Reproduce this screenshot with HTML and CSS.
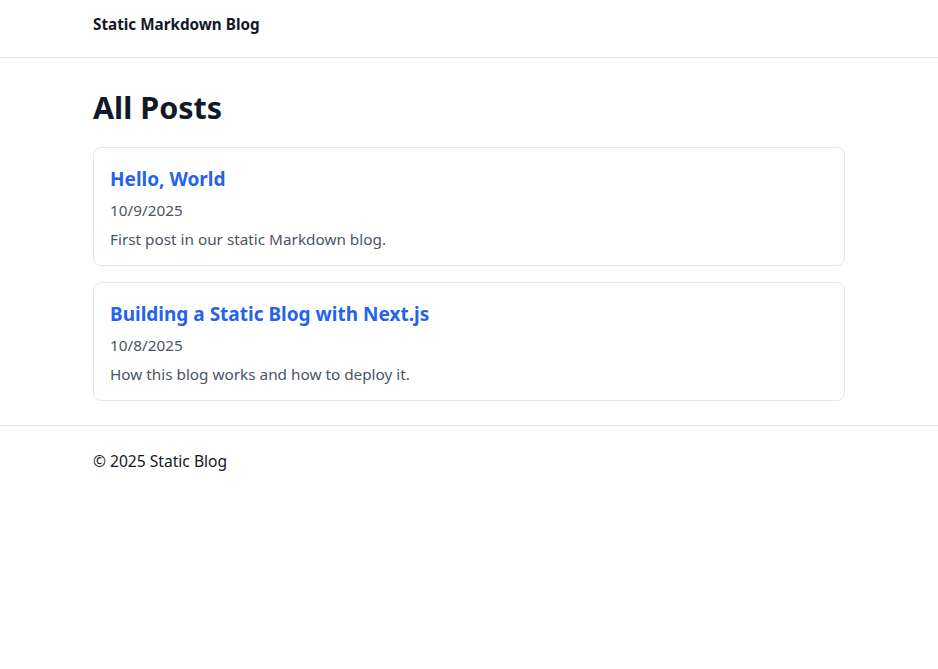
FILE: index.html
```html
<!DOCTYPE html>
<html lang="en">
<head>
    <meta charset="UTF-8">
    <meta name="viewport" content="width=device-width, initial-scale=1.0">
    <title>Static Markdown Blog</title>
    <link rel="stylesheet" href="styles.css">
</head>
<body>
    <header class="site-header">
        <div class="container">
            <a class="brand" href="#">Static Markdown Blog</a>
        </div>
    </header>

    <main class="container main">
        <h1 class="page-title">All Posts</h1>
        <ul class="post-list">
            <li class="post-card">
                <h2 class="post-title"><a href="#">Hello, World</a></h2>
                <p class="post-date">10/9/2025</p>
                <p class="post-excerpt">First post in our static Markdown blog.</p>
            </li>
            <li class="post-card">
                <h2 class="post-title"><a href="#">Building a Static Blog with Next.js</a></h2>
                <p class="post-date">10/8/2025</p>
                <p class="post-excerpt">How this blog works and how to deploy it.</p>
            </li>
        </ul>
    </main>

    <footer class="site-footer">
        <div class="container">
            <p>&copy; 2025 Static Blog</p>
        </div>
    </footer>
</body>
</html>
```

FILE: styles.css
```css
* { margin: 0; padding: 0; box-sizing: border-box; }
body { font-family: "Noto Sans", "Open Sans", Arial, sans-serif; background: #fff; color: #111827; font-size: 15.3px; line-height: 24px; }
a { color: inherit; text-decoration: none; }
.container { max-width: 752px; margin: 0 auto; }

.site-header { border-bottom: 1px solid #e5e7eb; padding: 12px 0 21px; }
.brand { font-weight: 700; font-size: 15.25px; color: #111827; }

.main { padding: 32px 0 24px; }
.page-title { font-size: 30.5px; line-height: 34px; font-weight: 700; color: #111827; margin-bottom: 23px; }

.post-list { list-style: none; display: flex; flex-direction: column; gap: 16px; }
.post-card { border: 1px solid #e5e7eb; border-radius: 8px; padding: 17px 16px 14px; }
.post-title { font-size: 19px; line-height: 28px; font-weight: 700; }
.post-title a { color: #2563eb; }
.post-date { font-size: 15.3px; color: #4b5563; margin-top: 5px; }
.post-excerpt { font-size: 15.3px; color: #4b5563; margin-top: 5px; }

.site-footer { border-top: 1px solid #e5e7eb; padding: 23px 0; }
.site-footer p { font-size: 15.6px; color: #111827; }
```
